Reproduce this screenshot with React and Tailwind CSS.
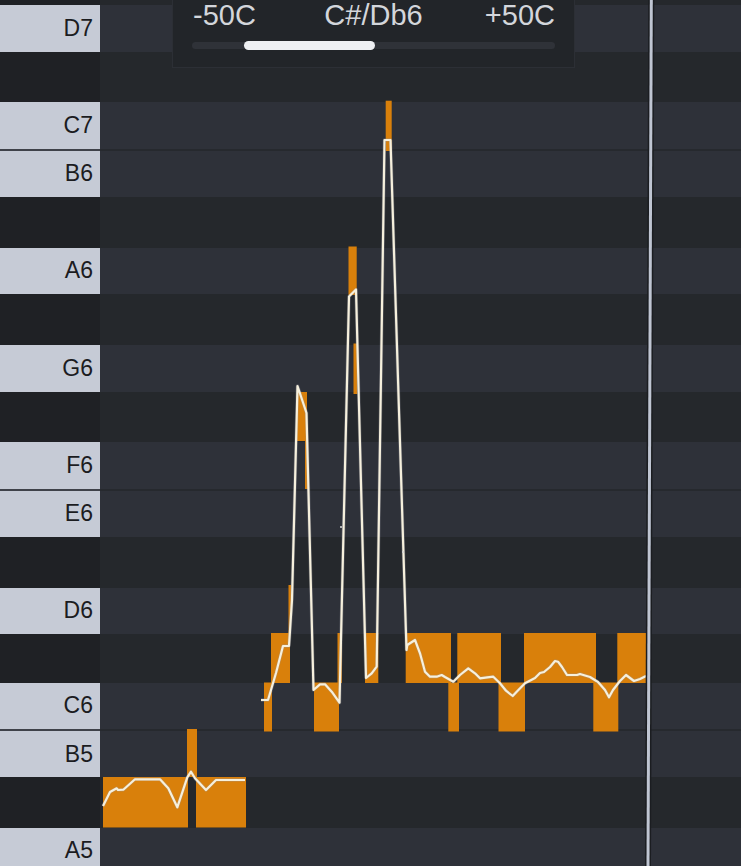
const ROWS = [
  { note: "D#7", black: true, h: "h-[5px]" },
  { note: "D7", h: "h-[46.5px]" },
  { note: "C#7", black: true, h: "h-[50.5px]" },
  { note: "C7", h: "h-[46.5px]" },
  { note: "B6", sep: true, h: "h-[48.5px]" },
  { note: "A#6", black: true, h: "h-[50.5px]" },
  { note: "A6", h: "h-[46.5px]" },
  { note: "G#6", black: true, h: "h-[51px]" },
  { note: "G6", h: "h-[46.5px]" },
  { note: "F#6", black: true, h: "h-[50.5px]" },
  { note: "F6", h: "h-[46.5px]" },
  { note: "E6", sep: true, h: "h-[48.5px]" },
  { note: "D#6", black: true, h: "h-[50.5px]" },
  { note: "D6", h: "h-[46px]" },
  { note: "C#6", black: true, h: "h-[49px]" },
  { note: "C6", h: "h-[46.5px]" },
  { note: "B5", sep: true, h: "h-[48px]" },
  { note: "A#5", black: true, h: "h-[50.5px]" },
  { note: "A5", h: "h-[46.5px]" },
  { note: "G#5", black: true, h: "h-[50.5px]" },
];

// detected note segments: [x1, x2, y1, y2]
const BLOCKS = [
  [103, 188, 777, 827.5],
  [196, 246, 777, 827.5],
  [187, 197, 729, 777],
  [264, 272, 682.5, 731.5],
  [271, 290, 633, 683],
  [288.5, 291, 585, 633],
  [297, 307, 392, 441],
  [305, 308, 441, 489],
  [314, 339, 682.5, 731.5],
  [337.5, 342, 633, 683],
  [348.5, 356.7, 246.5, 295],
  [353.5, 357.3, 343.5, 394],
  [385.7, 391.7, 100.7, 151],
  [365, 378.3, 633, 683],
  [405.7, 451, 633, 683],
  [448.3, 459, 682.5, 731.5],
  [457.3, 501, 633, 683],
  [498.5, 525, 682.5, 731.5],
  [524, 596, 633, 683],
  [593.3, 618.3, 682.5, 731.5],
  [617.3, 646.7, 633, 683],
];

const PITCH_A = [
  [103, 806], [110, 792], [116.7, 788.3], [118, 790], [123.3, 789.7], [135, 779.3],
  [160, 779.3], [168.3, 788.3], [177.3, 807.3], [187.3, 777.3], [191, 771.7],
  [195, 778.3], [206, 790], [216, 780], [245, 780],
];

const PITCH_B = [
  [261, 700], [268, 700], [271, 690], [276, 673], [283, 646], [289, 646], [292, 600],
  [297.5, 386], [306.5, 413], [313.5, 690], [320, 684.3], [325, 684.3], [331.7, 691.7],
  [339.5, 702.7], [349, 296.5], [356, 289.5], [366, 678], [371.7, 673.3], [376.7, 666.7],
  [384.5, 140], [390.5, 140], [406.5, 650], [407.3, 645], [415, 640], [420, 653.3],
  [425, 671.7], [430, 676.7], [436.7, 676.7], [441.7, 675], [445, 677], [453.3, 681.7],
  [460, 675], [468.3, 668.3], [475, 673.3], [480, 678.3], [487.3, 677.3], [493.3, 676.7],
  [500, 683.3], [506, 690.7], [512.7, 696], [516.7, 691.7], [525, 683.3], [535, 678],
  [540, 673], [544, 672], [550, 667], [555, 661], [558, 661.7], [562, 667], [567, 675],
  [577, 675], [580, 674], [590, 677], [598, 682], [605, 690], [609, 697.3], [613, 690],
  [620, 681], [626, 675], [634, 681], [640, 679], [646, 676],
];

const pts = (list) => list.map(([x, y]) => `${x},${y}`).join(" ");

function KeyRow({ row }) {
  if (row.black) {
    return (
      <div className={`flex shrink-0 ${row.h}`}>
        <div className="w-[100px] shrink-0 bg-[#1f2125]" />
        <div className="flex-1 bg-[#25282c]" />
      </div>
    );
  }

  return (
    <div className={`flex shrink-0 ${row.h}`}>
      <div
        className={`flex w-[100px] shrink-0 items-center justify-end bg-[#c6cbd6] pr-[7px] text-[23px] leading-none text-[#1b1c1f] ${
          row.sep ? "border-t-2 border-[#3f424a]" : ""
        }`}
      >
        {row.note}
      </div>
      <div
        className={`flex-1 bg-[#2e3139] ${row.sep ? "border-t-2 border-[#26292e]" : ""}`}
      />
    </div>
  );
}

function PitchChart() {
  return (
    <svg
      className="pointer-events-none absolute inset-0 h-full w-full"
      viewBox="0 0 741 866"
    >
      {BLOCKS.map(([x1, x2, y1, y2], i) => (
        <rect key={i} x={x1} y={y1} width={x2 - x1} height={y2 - y1} fill="#d9800b" />
      ))}
      {[PITCH_A, PITCH_B].map((line, i) => (
        <g key={i}>
          <polyline
            points={pts(line)}
            fill="none"
            stroke="#9a9ca3"
            strokeOpacity="0.35"
            strokeWidth="3.5"
            strokeLinejoin="round"
          />
          <polyline
            points={pts(line)}
            fill="none"
            stroke="#f6f0dd"
            strokeWidth="2.2"
            strokeLinejoin="round"
          />
        </g>
      ))}
      <circle cx="341" cy="527" r="1" fill="#d8d8d8" />
      <circle cx="403" cy="552" r="1" fill="#d8d8d8" />
      <line x1="651.3" y1="0" x2="648" y2="866" stroke="#1b1d21" strokeWidth="6" />
      <line x1="651.3" y1="0" x2="648" y2="866" stroke="#bfc5d2" strokeWidth="3" />
    </svg>
  );
}

function TunerPanel() {
  return (
    <div className="absolute left-[172px] top-0 flex h-[68px] w-[403px] flex-col border-x border-b border-[#2c2f35] bg-[#222529] px-[19px] pt-[1px]">
      <div className="grid h-[29px] grid-cols-3 text-[29px] leading-[29px] text-[#d3d6db]">
        <span className="pl-[1px] text-left">-50C</span>
        <span className="text-center">C#/Db6</span>
        <span className="text-right">+50C</span>
      </div>
      <div className="relative mt-[12px] h-[7px] rounded-full bg-[#2f3238]">
        <div className="absolute left-[51.5px] top-[-1px] h-[9px] w-[131px] rounded-full bg-[#eef0f3]" />
      </div>
    </div>
  );
}

export default function App() {
  return (
    <div className="relative h-[866px] w-[741px] overflow-hidden bg-[#25282c] font-['Liberation_Sans',Arial,sans-serif]">
      <div className="flex flex-col">
        {ROWS.map((row) => (
          <KeyRow key={row.note} row={row} />
        ))}
      </div>
      <PitchChart />
      <TunerPanel />
    </div>
  );
}
